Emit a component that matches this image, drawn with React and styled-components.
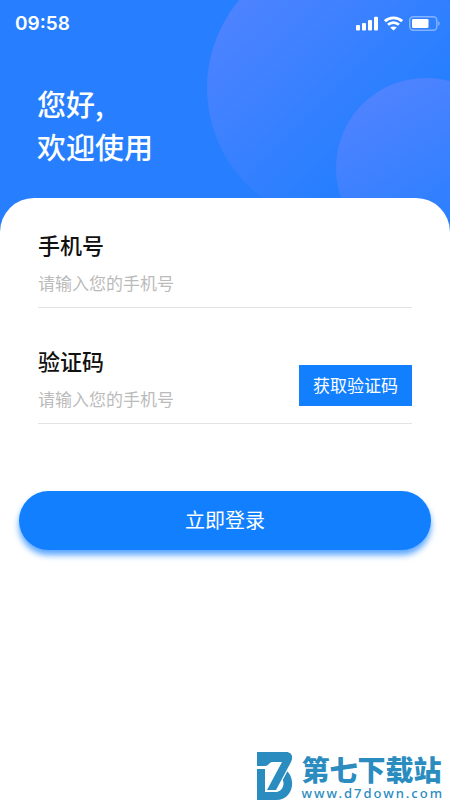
import React, { useState } from 'react'
import styled, { createGlobalStyle } from 'styled-components'

const GlobalStyle = createGlobalStyle`
  * {
    box-sizing: border-box;
  }
  body {
    margin: 0;
    background: #fff;
    font-family: "Noto Sans CJK SC", "Liberation Sans", sans-serif;
  }
  button, input {
    font-family: inherit;
  }
`

const SignalIcon = () => (
  <svg width="22" height="15" viewBox="0 0 22 15" fill="#fff" aria-hidden="true">
    <rect x="0" y="9" width="4" height="5.5" rx="1" />
    <rect x="6" y="7" width="4" height="7.5" rx="1" />
    <rect x="12" y="4" width="4" height="10.5" rx="1" />
    <rect x="18" y="0.8" width="4" height="13.7" rx="1" />
  </svg>
)

const WifiIcon = () => (
  <svg width="19" height="15" viewBox="0 0 19 15" aria-hidden="true">
    <g fill="none" stroke="#fff" strokeWidth="2.8">
      <path d="M0.9 5.2C5.6 0.7 13.4 0.7 18.1 5.2" />
      <path d="M4 8.8C7.1 5.9 11.9 5.9 15 8.8" />
    </g>
    <path d="M9.5 14.6L6.2 11.6C8.1 10 10.9 10 12.8 11.6Z" fill="#fff" />
  </svg>
)

const BatteryIcon = () => (
  <svg width="31" height="15" viewBox="0 0 31 15" aria-hidden="true">
    <rect x="0.8" y="0.8" width="27" height="13.4" rx="3.4" fill="none" stroke="#fff" strokeOpacity="0.4" strokeWidth="1.5" />
    <rect x="3" y="3" width="16.5" height="9" rx="1.2" fill="#fff" />
    <path d="M29.4 5.2C31 5.8 31 9.2 29.4 9.8Z" fill="#fff" fillOpacity="0.5" />
  </svg>
)

const SiteLogo = () => (
  <svg width="36" height="48" viewBox="0 0 36 48" aria-hidden="true">
    <path d="M0 17H8V40H18C29 40 29 24 20 24L22 16C40 17 40 48 19 48H0Z" fill="#2b8cc0" />
    <path
      d="M0 0H29C35 0 36.5 5 34 10L19 38H10L25 10H15C12.5 10 11.5 14 8 14H0Z"
      fill="#2b8cc0"
      stroke="#fff"
      strokeWidth="2.4"
      paintOrder="stroke"
    />
  </svg>
)

const App = () => {
  const [phone, setPhone] = useState('')
  const [code, setCode] = useState('')

  return (
    <Page>
      <GlobalStyle />
      <Header>
        <StatusBar>
          <Time>09:58</Time>
          <StatusIcons>
            <SignalIcon />
            <WifiIcon />
            <BatteryIcon />
          </StatusIcons>
        </StatusBar>
        <Title>
          您好,
          <br />
          欢迎使用
        </Title>
      </Header>

      <Card onSubmit={(e) => e.preventDefault()}>
        <Field>
          <Label htmlFor="phone">手机号</Label>
          <Input
            id="phone"
            type="tel"
            placeholder="请输入您的手机号"
            value={phone}
            onChange={(e) => setPhone(e.target.value)}
          />
        </Field>
        <Field>
          <FieldRow>
            <FieldText>
              <Label htmlFor="code">验证码</Label>
              <Input
                id="code"
                type="text"
                placeholder="请输入您的手机号"
                value={code}
                onChange={(e) => setCode(e.target.value)}
              />
            </FieldText>
            <CodeButton type="button">获取验证码</CodeButton>
          </FieldRow>
        </Field>
        <LoginButton type="submit">立即登录</LoginButton>
      </Card>

      <Footer>
        <SiteLogo />
        <SiteText>
          <SiteName>第七下载站</SiteName>
          <SiteUrl>www.d7down.com</SiteUrl>
        </SiteText>
      </Footer>
    </Page>
  )
}

export default App

const Page = styled.div`
  display: flex;
  flex-direction: column;
  min-height: 100vh;
`

const Header = styled.header`
  position: relative;
  overflow: hidden;
  padding-bottom: 64px;
  color: #fff;
  background: #277fff;

  /* decorative circles behind the greeting */
  &::before,
  &::after {
    content: "";
    position: absolute;
    border-radius: 50%;
  }
  &::before {
    top: -48px;
    right: -29px;
    width: 272px;
    height: 272px;
    background: linear-gradient(135deg, #5183ff 10%, #277fff 66%);
  }
  &::after {
    top: 78px;
    right: -66px;
    width: 180px;
    height: 180px;
    background: linear-gradient(150deg, #5183ff 10%, #277fff 80%);
  }
`

const StatusBar = styled.div`
  position: relative;
  z-index: 1;
  display: flex;
  align-items: center;
  justify-content: space-between;
  height: 47px;
  padding: 0 10px 0 15px;
`

const Time = styled.span`
  font-family: Inter, "Liberation Sans", sans-serif;
  font-size: 19px;
  font-weight: 600;
`

const StatusIcons = styled.div`
  display: flex;
  align-items: center;
  gap: 6px;
`

const Title = styled.h1`
  position: relative;
  z-index: 1;
  margin: 0;
  padding: 35px 37px 0;
  font-size: 29px;
  font-weight: 500;
  line-height: 43px;
`

const Card = styled.form`
  position: relative;
  z-index: 1;
  margin-top: -34px;
  padding: 31px 38px 0;
  border-radius: 34px 34px 0 0;
  background: #fff;
`

const Field = styled.div`
  margin-bottom: 37px;
  border-bottom: 1px solid #e3e3e3;
`

const FieldRow = styled.div`
  display: flex;
  align-items: center;
`

const FieldText = styled.div`
  flex: 1;
  min-width: 0;
`

const Label = styled.label`
  display: block;
  color: #111;
  font-size: 22px;
  font-weight: 500;
  line-height: 31px;
`

const Input = styled.input`
  display: block;
  width: 100%;
  height: 47px;
  padding: 0 0 3px;
  border: 0;
  outline: none;
  background: transparent;
  color: #111;
  font-size: 17px;

  &::placeholder {
    color: #bbb;
    opacity: 1;
  }
`

const CodeButton = styled.button`
  flex: none;
  height: 41px;
  margin-top: 2px;
  padding: 0 14px 2px;
  border: 0;
  background: #127fff;
  color: #fff;
  font-size: 17px;
  cursor: pointer;
`

const LoginButton = styled.button`
  display: block;
  width: calc(100% + 38px);
  height: 59px;
  margin: 67px -19px 0;
  padding: 0 0 3px;
  border: 0;
  border-radius: 30px;
  background: #127fff;
  box-shadow: 0 5px 6px rgba(18, 127, 255, 0.7);
  color: #fff;
  font-size: 20px;
  cursor: pointer;
`

const Footer = styled.footer`
  display: flex;
  align-items: center;
  justify-content: flex-end;
  gap: 8px;
  margin-top: auto;
  padding-right: 6px;
  color: #2b8cc0;
`

const SiteText = styled.div`
  display: flex;
  flex-direction: column;
`

const SiteName = styled.strong`
  font-size: 28px;
  font-weight: 900;
  line-height: 34px;
`

const SiteUrl = styled.span`
  font-family: "Noto Sans", sans-serif;
  font-size: 13px;
  font-weight: 500;
  line-height: 14px;
  letter-spacing: 2px;
`
